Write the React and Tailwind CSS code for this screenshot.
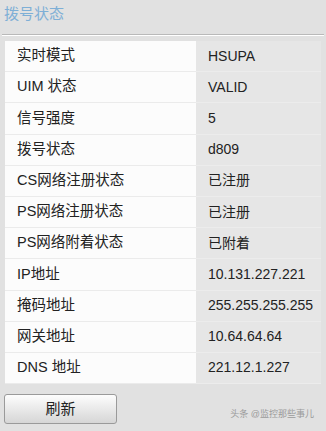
import React from "react";

const rows = [
  ["实时模式", "HSUPA"],
  ["UIM 状态", "VALID"],
  ["信号强度", "5"],
  ["拨号状态", "d809"],
  ["CS网络注册状态", "已注册"],
  ["PS网络注册状态", "已注册"],
  ["PS网络附着状态", "已附着"],
  ["IP地址", "10.131.227.221"],
  ["掩码地址", "255.255.255.255"],
  ["网关地址", "10.64.64.64"],
  ["DNS 地址", "221.12.1.227"],
];

const font = {
  fontFamily: '"Liberation Sans", "Noto Sans CJK SC", sans-serif',
};

export default function App() {
  return (
    <div
      className="w-[326px] h-[431px] bg-[#e1e1e1] text-[#222] overflow-hidden"
      style={font}
    >
      <div className="h-[34px] px-[4px] pt-[3px] text-[15px] text-[#7eafd6]">
        拨号状态
      </div>
      <div className="mx-[2px] border-t border-[#b9b9b9] border-b border-b-white" />
      <div className="mt-[5px] mx-[5px]">
        {rows.map(([k, v], i) => (
          <div key={i} className="flex h-[31.2px] text-[14.5px]">
            <div className="w-[191px] bg-[#fcfcfc] border-b border-[#ebebeb] pl-[12px] flex items-center">
              {k}
            </div>
            <div className="flex-1 bg-[#e6e6e6] border-b border-[#ececec] pl-[12px] flex items-center text-[14px]">
              {v}
            </div>
          </div>
        ))}
      </div>
      <div className="flex items-end justify-between px-[4px] mt-[10px]">
        <button className="w-[113px] h-[30px] rounded-[3px] border border-[#9a9a9a] bg-gradient-to-b from-[#fdfdfd] to-[#d6d6d6] text-[15px] text-[#222]">
          刷新
        </button>
        <div className="text-[9px] text-[#9a9a9a] pr-[8px] pb-[3px]">
          头条 @监控那些事儿
        </div>
      </div>
    </div>
  );
}
